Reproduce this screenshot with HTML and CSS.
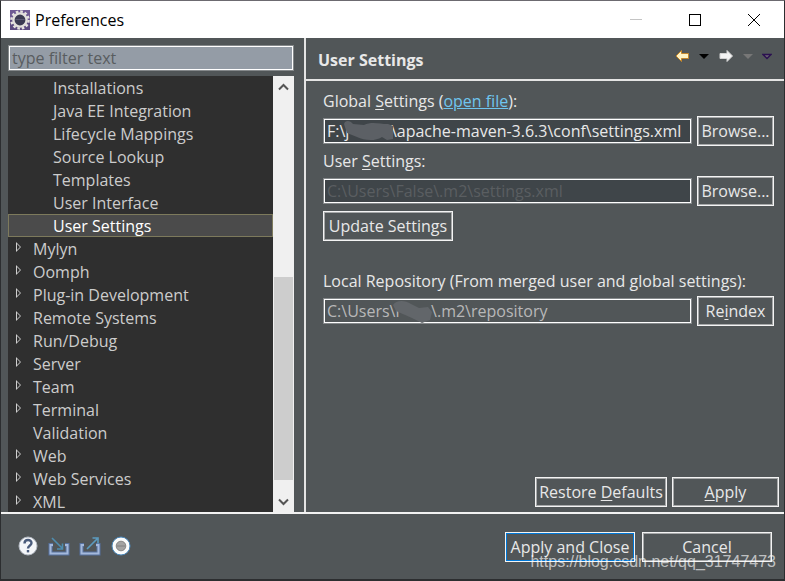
FILE: index.html
```html
<!DOCTYPE html>
<html lang="en">
<head>
  <meta charset="UTF-8" />
  <title>Preferences</title>
  <link rel="stylesheet" href="styles.css">
</head>
<body>
  <header class="titlebar">
    <svg class="app-icon" width="20" height="20" viewBox="0 0 20 20">
      <rect width="20" height="20" fill="#6f5a94" />
      <rect y="10" width="20" height="10" fill="#5c4a80" />
      <circle cx="10" cy="10" r="8.6" fill="none" stroke="#e6e3e0" stroke-width="2.4" stroke-dasharray="2.6 1.9" />
      <circle cx="10" cy="10" r="6.6" fill="#3b3a52" stroke="#e2dfdc" stroke-width="2.4" />
      <path d="M5.5 9.500h9" stroke="#5a5872" />
    </svg>
    <h1>Preferences</h1>
    <div class="window-controls">
      <button aria-label="Minimize" disabled><svg width="14" height="14"><path d="M1 6.5h12" stroke="#c4c4c4" /></svg></button>
      <button aria-label="Maximize"><svg width="14" height="14"><rect x="1.5" y="1.5" width="11" height="11" fill="none" stroke="#000" /></svg></button>
      <button aria-label="Close"><svg width="14" height="14"><path d="M1 1l12 12M13 1L1 13" stroke="#000" /></svg></button>
    </div>
  </header>

  <main class="panes">
    <nav class="sidebar">
      <input class="field filter" type="text" placeholder="type filter text" aria-label="Filter" />
      <div class="tree-box">
        <ul class="tree">
          <li class="child">Installations</li>
          <li class="child">Java EE Integration</li>
          <li class="child">Lifecycle Mappings</li>
          <li class="child">Source Lookup</li>
          <li class="child">Templates</li>
          <li class="child">User Interface</li>
          <li class="child selected">User Settings</li>
          <li class="parent">Mylyn</li>
          <li class="parent">Oomph</li>
          <li class="parent">Plug-in Development</li>
          <li class="parent">Remote Systems</li>
          <li class="parent">Run/Debug</li>
          <li class="parent">Server</li>
          <li class="parent">Team</li>
          <li class="parent">Terminal</li>
          <li>Validation</li>
          <li class="parent">Web</li>
          <li class="parent">Web Services</li>
          <li class="parent">XML</li>
        </ul>
        <div class="scrollbar">
          <button aria-label="Scroll up"><svg width="11" height="8"><path d="M1 6.5L5.5 2l4.5 4.5" fill="none" stroke="#555" stroke-width="2" /></svg></button>
          <div class="track"><div class="thumb"></div></div>
          <button aria-label="Scroll down"><svg width="11" height="8"><path d="M1 1.5L5.5 6l4.5-4.5" fill="none" stroke="#555" stroke-width="2" /></svg></button>
        </div>
      </div>
    </nav>

    <section class="content">
      <div class="page-header">
        <h2>User Settings</h2>
        <div class="history">
          <button aria-label="Back"><svg width="16" height="14"><path d="M2 7L7.5 1.5V4.500H14.500V9.500H7.500V12.500z" fill="#fff3c4" stroke="#c4862a" /></svg></button>
          <button aria-label="Back history"><svg width="10" height="14"><path d="M0 5h10L5 10z" fill="#000" /></svg></button>
          <button aria-label="Forward"><svg width="16" height="14"><path d="M14.5 7L9 1.5V4.500H2V9.500H9V12.500z" fill="#f4f4f4" stroke="#d2d2d2" /></svg></button>
          <button aria-label="Forward history"><svg width="10" height="14"><path d="M0 5h10L5 10z" fill="#777" /></svg></button>
          <button aria-label="View menu"><svg width="10" height="14"><path d="M1 5.5h8L5 9.5z" fill="#6b6570" stroke="#2b1050" stroke-width="1.4" /></svg></button>
        </div>
      </div>

      <form class="settings" id="settings">
        <label for="global">Global <u>S</u>ettings (<a href="#">open file</a>):</label>
        <div class="row">
          <div class="field-box">
            <input class="field" id="global" type="text" value="F:\j          \apache-maven-3.6.3\conf\settings.xml" />
            <svg class="smudge smudge-global" width="54" height="22"><path d="M1 4C2 0 7 0 10 4L21 5C29 1 36 4 45 4L50 6V19L44 20L39 17C31 22 21 20 14 17L4 13z" fill="#5c6065" /></svg>
          </div>
          <button type="button" class="btn">Browse...</button>
        </div>

        <label for="user">User <u>S</u>ettings:</label>
        <div class="row">
          <div class="field-box">
            <input class="field" id="user" type="text" value="C:\Users\False\.m2\settings.xml" disabled />
          </div>
          <button type="button" class="btn">Browse...</button>
        </div>
        <button type="button" class="btn update">Update Settings</button>

        <label for="repo">Local Repository (From merged user and global settings):</label>
        <div class="row">
          <div class="field-box">
            <input class="field" id="repo" type="text" value="C:\Users\r       \.m2\repository" readonly />
            <svg class="smudge smudge-repo" width="42" height="24"><path d="M1 5C4 0 13 0 19 4L27 8L36 7L40 12L38 20L30 23L20 18L4 11z" fill="#62666a" /></svg>
          </div>
          <button type="button" class="btn">Re<u>i</u>ndex</button>
        </div>
      </form>

      <div class="page-buttons">
        <button class="btn restore">Restore <u>D</u>efaults</button>
        <button class="btn apply"><u>A</u>pply</button>
      </div>
    </section>
  </main>

  <footer class="footer">
    <div class="tools">
      <button aria-label="Help"><svg width="22" height="22"><circle cx="11" cy="11" r="9" fill="#f4f6f9" stroke="#b4bac4" /><path d="M7.5 8.500C7.500 4 14.500 4 14.500 8C14.500 10.500 11 10.500 11 13.500" fill="none" stroke="#4a5c7c" stroke-width="2.4" /><rect x="9.800" y="15" width="2.4" height="2.4" fill="#4a5c7c" /></svg></button>
      <button aria-label="Import"><svg width="22" height="22"><path d="M5 10H2.500V18.500H19.500V10H17" fill="none" stroke="#56719f" stroke-width="4" /><path d="M5 10H2.500V18.500H19.500V10H17" fill="none" stroke="#a4b9dc" stroke-width="2" /><path d="M4 3L14 13M14.500 8.500V14H9" fill="none" stroke="#4e8db0" stroke-width="1.6" /></svg></button>
      <button aria-label="Export"><svg width="22" height="22"><path d="M5 10H2.500V18.500H19.500V10H17" fill="none" stroke="#56719f" stroke-width="4" /><path d="M5 10H2.500V18.500H19.500V10H17" fill="none" stroke="#a4b9dc" stroke-width="2" /><path d="M8 14L18 4M13.500 3H19V8.500" fill="none" stroke="#5c9cc0" stroke-width="1.6" /></svg></button>
      <button aria-label="Oomph recorder"><svg width="22" height="22"><circle cx="11" cy="11" r="9" fill="#fbfcfc" stroke="#4a88bd" /><circle cx="11" cy="11" r="4.800" fill="#a3a3a3" stroke="#858585" /><path d="M7 11h8" stroke="#808080" /></svg></button>
    </div>
    <div class="dialog-buttons">
      <button class="btn default">Apply and Close</button>
      <button class="btn">Cancel</button>
    </div>
    <span class="watermark">https://blog.csdn.net/qq_31747473</span>
  </footer>
</body>
</html>
```
FILE: styles.css
```css
* {
  box-sizing: border-box;
}

body {
  display: flex;
  flex-direction: column;
  height: 100vh;
  margin: 0;
  border: 1px solid #2c2e30;
  border-top-color: #6c6a70;
  border-bottom-width: 2px;
  background: #515658;
  color: #e8e8e8;
  font-family: "Open Sans", "Noto Sans", sans-serif;
  font-size: 16px;
  line-height: 20px;
}

button, input {
  font: inherit;
  color: inherit;
}

button {
  padding: 0;
  border: none;
  background: none;
}

svg {
  display: block;
}

h1, h2 {
  margin: 0;
  font-size: 16px;
}

u {
  text-underline-offset: 2px;
}

/* title bar */
.titlebar {
  display: flex;
  align-items: center;
  height: 37px;
  padding: 0 1px 0 9px;
  gap: 5px;
  background: #fff;
  color: #000;
}

.titlebar h1 {
  flex: 1;
  font-weight: normal;
}

.window-controls {
  display: flex;
}

.window-controls button {
  display: grid;
  place-items: center;
  width: 59px;
  height: 35px;
}

/* left side */
.panes {
  display: flex;
  flex: 1;
  min-height: 0;
  border-bottom: 2px solid #f2f2f2;
}

.sidebar {
  display: flex;
  flex-direction: column;
  flex: none;
  gap: 5px;
  width: 305px;
  padding: 7px 10px 0 7px;
  border-right: 2px solid #e4e4e4;
}

.field {
  display: block;
  width: 100%;
  height: 26px;
  padding: 0 3px;
  border: 1px solid #85898b;
  box-shadow: inset 0 0 0 1px #fff;
  background: #3f4549;
  outline: none;
}

.filter {
  background: #949ca6;
}

.filter::placeholder {
  color: #595d60;
  opacity: 1;
}

.tree-box {
  display: flex;
  flex: 1;
  min-height: 0;
  background: #2f2f2f;
}

.tree {
  flex: 1;
  margin: 0;
  padding: 0;
  overflow: hidden;
  list-style: none;
  color: #ccc;
}

.tree li {
  display: flex;
  height: 23px;
  padding-left: 25px;
  line-height: 24px;
}

.tree .child {
  padding-left: 45px;
}

.tree .selected {
  padding-left: 44px;
  border: 1px solid #7d7a5c;
  background: #4b4b4b;
  color: #fff;
  line-height: 22px;
}

.tree .parent {
  padding-left: 8px;
}

.parent::before {
  content: "";
  width: 5px;
  height: 10px;
  margin: 5px 12px 0 0;
  background: #d0d0d0;
  clip-path: polygon(evenodd, 0 0, 100% 50%, 0 100%, 0 0, 1px 2px, 1px 8px, 4px 5px, 1px 2px);
}

.scrollbar {
  display: flex;
  flex-direction: column;
  width: 21px;
  background: #f0f0f0;
}

.scrollbar button {
  display: grid;
  place-items: center;
  height: 21px;
}

.track {
  display: flex;
  flex: 1;
  flex-direction: column;
  justify-content: flex-end;
  padding: 0 1px 11px;
}

.thumb {
  height: 53%;
  background: #cdcdcd;
}

/* right side */
.content {
  display: flex;
  flex: 1;
  flex-direction: column;
}

.page-header {
  display: flex;
  align-items: center;
  justify-content: space-between;
  height: 43px;
  padding: 2px 12px 0;
  border-bottom: 2px solid #e4e4e4;
}

.history {
  display: flex;
  gap: 9px;
  padding-bottom: 8px;
}

.settings {
  display: flex;
  flex: 1;
  flex-direction: column;
  gap: 5px;
  padding: 10px 10px 0 17px;
}

.settings a {
  color: #6fc5ee;
}

.row {
  display: grid;
  grid-template-columns: 1fr 77px;
  align-items: center;
  gap: 5px;
}

.field-box {
  position: relative;
}

.field:read-only {
  background: #515658;
  color: #b8b8b8;
}

.field:disabled {
  background: #3f4549;
  color: #5a5e61;
}

.smudge {
  position: absolute;
}

.smudge-global {
  top: 2px;
  left: 20px;
}

.smudge-repo {
  top: 2px;
  left: 69px;
}

.btn {
  height: 30px;
  border: 1px solid #f4f4f4;
  box-shadow: inset 0 0 0 1px #a6a8a9;
}

.update {
  align-self: flex-start;
  width: 130px;
  margin-bottom: 25px;
}

.page-buttons {
  display: flex;
  justify-content: flex-end;
  gap: 5px;
  padding: 0 5px 5px;
}

.restore {
  width: 132px;
}

.apply {
  width: 107px;
}

/* bottom bar */
.footer {
  position: relative;
  display: flex;
  align-items: center;
  justify-content: space-between;
  height: 65px;
  padding: 0 12px 0 16px;
}

.tools {
  display: flex;
  gap: 9px;
  padding-bottom: 2px;
}

.dialog-buttons {
  display: flex;
  gap: 7px;
}

.dialog-buttons .btn {
  width: 130px;
}

.default {
  box-shadow: inset 0 0 0 1px #0078d7;
}

.watermark {
  position: absolute;
  right: 8px;
  bottom: 7px;
  color: rgba(255, 255, 255, 0.65);
  font-family: "Liberation Sans", sans-serif;
  font-size: 16px;
}
```
